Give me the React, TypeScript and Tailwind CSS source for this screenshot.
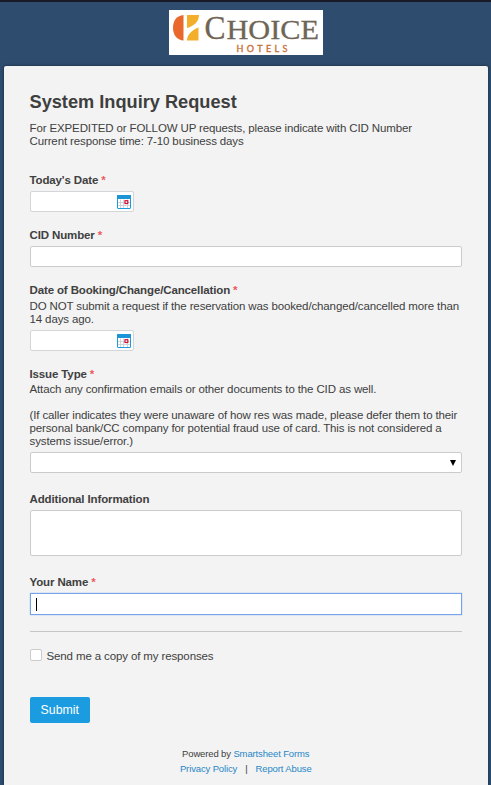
import type { ReactNode } from "react";

function Logo() {
  return (
    <svg width="154" height="45" viewBox="0 0 154 45" className="block bg-white">
      <path d="M14.500 5v25.500C8 30 4 25 4 17.700S8 5.500 14.500 5z" fill="#e8692b" />
      <path d="M18 5h12c0 6.500-5 11-12 13z" fill="#f3ae2b" />
      <path d="M29.500 17.500v13H18c0-6 5-10.500 11.500-13z" fill="#f3ae2b" />
      <g fill="#706554" stroke="#706554" strokeWidth="0.3" fontFamily="'Liberation Serif', serif">
        <text x="35.500" y="29" fontSize="33" textLength="21" lengthAdjust="spacingAndGlyphs">C</text>
        <text x="57.500" y="28.600" fontSize="28" textLength="92.500" lengthAdjust="spacingAndGlyphs">HOICE</text>
      </g>
      <text x="67.500" y="41.500" fontSize="9" textLength="51" fill="#c97440" stroke="#c97440" strokeWidth="0.4" fontFamily="Lato, sans-serif">HOTELS</text>
    </svg>
  );
}

function CalendarIcon() {
  return (
    <svg width="14" height="14" viewBox="0 0 14 14" className="block">
      <rect x="0.500" y="0.500" width="13" height="13" rx="0.500" fill="#fff" stroke="#1c9ce0" />
      <path d="M0 0h14v4H0z" fill="#1c94d8" />
      <path d="M3.500 4.500v8.500M6.500 4.500v8.500M10.500 4.500v8.500M1 7.500h12M1 10.500h12" stroke="#c4cdd2" strokeWidth="0.800" />
      <rect x="8" y="5.700" width="2.800" height="2.800" fill="#fff" stroke="#cc1238" strokeWidth="1.200" />
    </svg>
  );
}

function Label({ children, required = false }: { children: ReactNode; required?: boolean }) {
  return (
    <div className="flex h-[14px] gap-[3px] text-[11.5px] leading-[14px] font-bold tracking-[-0.13px]">
      <span>{children}</span>
      {required && <span className="text-[#ec5a5a]">*</span>}
    </div>
  );
}

function Line({ children, className }: { children?: ReactNode; className?: string }) {
  return (
    <div className="h-[13px] leading-[13px] tracking-[-0.125px] whitespace-nowrap">
      <span className={className}>{children}</span>
    </div>
  );
}

function DateInput() {
  return (
    <div className="flex h-[21px] w-[104px] items-center justify-end rounded-[2px] border border-[#d2d6d9] bg-white pr-[2px]">
      <CalendarIcon />
    </div>
  );
}

export default function App() {
  return (
    <div className="flex h-[785px] w-[491px] flex-col overflow-hidden border-t-2 border-[#181b27] bg-[#2e4c6d] font-['Liberation_Sans',Arial,sans-serif] text-[11.5px] text-[#404040]">
      <header className="flex h-[64px] justify-center pt-[8px]">
        <Logo />
      </header>
      <main className="mr-[3px] ml-[4px] flex flex-1 flex-col rounded-t-[2px] bg-[#f3f3f3] pr-[26px] pl-[25.5px] shadow-[0_0_3px_#10253b]">
        <h1 className="mt-[25px] h-[22px] text-[18.2px] leading-[22px] font-bold whitespace-nowrap text-[#3e3e3e]">System Inquiry Request</h1>
        <div className="mt-[9px]">
          <Line>For EXPEDITED or FOLLOW UP requests, please indicate with CID Number</Line>
          <Line>Current response time: 7-10 business days</Line>
        </div>
        <section className="mt-[25px] flex flex-col gap-[4px]">
          <Label required>Today's Date</Label>
          <DateInput />
        </section>
        <section className="mt-[16px] flex w-[432px] flex-col gap-[4px]">
          <Label required>CID Number</Label>
          <div className="h-[21px] rounded-[2px] border border-[#cbcbcb] bg-white" />
        </section>
        <section className="mt-[16px] flex flex-col">
          <Label required>Date of Booking/Change/Cancellation</Label>
          <div className="mt-[3px] mb-[4px]">
            <Line>DO NOT submit a request if the reservation was booked/changed/cancelled more than</Line>
            <Line>14 days ago.</Line>
          </div>
          <DateInput />
        </section>
        <section className="mt-[16px] flex w-[432px] flex-col">
          <Label required>Issue Type</Label>
          <div className="mt-[2px] mb-[4px]">
            <Line>Attach any confirmation emails or other documents to the CID as well.</Line>
            <Line />
            <Line>(If caller indicates they were unaware of how res was made, please defer them to their</Line>
            <Line>personal bank/CC company for potential fraud use of card. This is not considered a</Line>
            <Line>systems issue/error.)</Line>
          </div>
          <div className="flex h-[21px] items-center justify-end rounded-[2px] border border-[#cbcbcb] bg-white pr-[5px]">
            <svg width="6" height="6" viewBox="0 0 6 6"><path d="M0 0h6L3 6z" fill="#000" /></svg>
          </div>
        </section>
        <section className="mt-[19px] flex w-[432px] flex-col gap-[4px]">
          <Label>Additional Information</Label>
          <div className="h-[46px] rounded-[2px] border border-[#cbcbcb] bg-white" />
        </section>
        <section className="mt-[19px] flex w-[432px] flex-col gap-[4px]">
          <Label required>Your Name</Label>
          <div className="flex h-[22px] items-center border border-[#76a3ea] bg-white pl-[5px] shadow-[0_0_1px_#76a3ea]">
            <span className="h-[13px] w-px bg-black" />
          </div>
        </section>
        <hr className="mt-[16px] w-[432px] border-[#c6c6c6]" />
        <div className="mt-[17px] flex h-[13px] gap-[5px]">
          <span className="h-[12px] w-[12px] rounded-[2px] border border-[#ccc] bg-white" />
          <div className="pt-px"><Line>Send me a copy of my responses</Line></div>
        </div>
        <button className="mt-[35px] h-[26px] w-[60.5px] rounded-[2px] bg-[#1c9ce0] text-[12.3px] text-white">Submit</button>
        <footer className="mt-[23px] flex flex-col items-center text-[9.5px] leading-[15px] tracking-[-0.13px]">
          <p>Powered by <span className="text-[#2787c7]">Smartsheet Forms</span></p>
          <p className="flex gap-[8px]"><span className="text-[#2787c7]">Privacy Policy</span><span>|</span><span className="text-[#2787c7]">Report Abuse</span></p>
        </footer>
      </main>
    </div>
  );
}
